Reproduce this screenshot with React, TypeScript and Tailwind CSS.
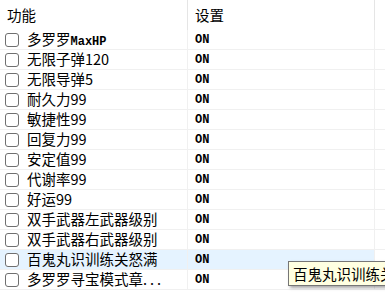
const rows = [
  { name: "多罗罗", mono: "MaxHP" },
  { name: "无限子弹120" },
  { name: "无限导弹5" },
  { name: "耐久力99" },
  { name: "敏捷性99" },
  { name: "回复力99" },
  { name: "安定值99" },
  { name: "代谢率99" },
  { name: "好运99" },
  { name: "双手武器左武器级别" },
  { name: "双手武器右武器级别" },
  { name: "百鬼丸识训练关怒满", hover: true },
  { name: "多罗罗寻宝模式章", more: true },
];

const cjk = "font-['Microsoft_YaHei','Noto_Sans_CJK_SC',sans-serif]";

export default function App() {
  return (
    <div className={`relative w-[385px] h-[302px] overflow-hidden bg-white text-black ${cjk}`}>
      {/* Header */}
      <div className="flex h-[30px] text-[14.5px]">
        <div className="w-[188px] flex items-center pl-[7px] border-r border-[#e5e5e5]">功能</div>
        <div className="w-[187px] flex items-center pl-[7px] border-r border-[#e5e5e5]">设置</div>
        <div className="flex-1" />
      </div>

      {/* Rows */}
      {rows.map((r, i) => (
        <div
          key={i}
          className={`flex h-[20px] border-b border-[#f0f0f0] ${r.hover ? "bg-[#e5f3ff]" : ""}`}
        >
          <div className="w-[188px] flex items-center border-r border-[#f0f0f0] pl-[5px]">
            <span className="w-[14px] h-[14px] rounded-[3px] border border-[#6f6f6f] bg-white shrink-0" />
            <span className="ml-[8px] text-[14.5px] leading-none whitespace-nowrap">
              {r.name}
              {r.mono && <span className="font-mono text-[12px] font-bold">{r.mono}</span>}
              {r.more && <span className="tracking-[3px]">...</span>}
            </span>
          </div>
          <div className="w-[187px] flex items-center pl-[7px] border-r border-[#f0f0f0] font-mono text-[12px] font-bold">
            ON
          </div>
          <div className={`flex-1 ${r.hover ? "bg-white" : ""}`} />
        </div>
      ))}

      {/* Tooltip */}
      <div className="absolute left-[288px] top-[261px] h-[25px] pl-[4px] pr-[6px] flex items-center bg-[#ffffe1] border border-[#767676] shadow-[2px_2px_3px_rgba(0,0,0,0.35)] text-[14.5px] whitespace-nowrap">
        百鬼丸识训练关怒满
      </div>
    </div>
  );
}
